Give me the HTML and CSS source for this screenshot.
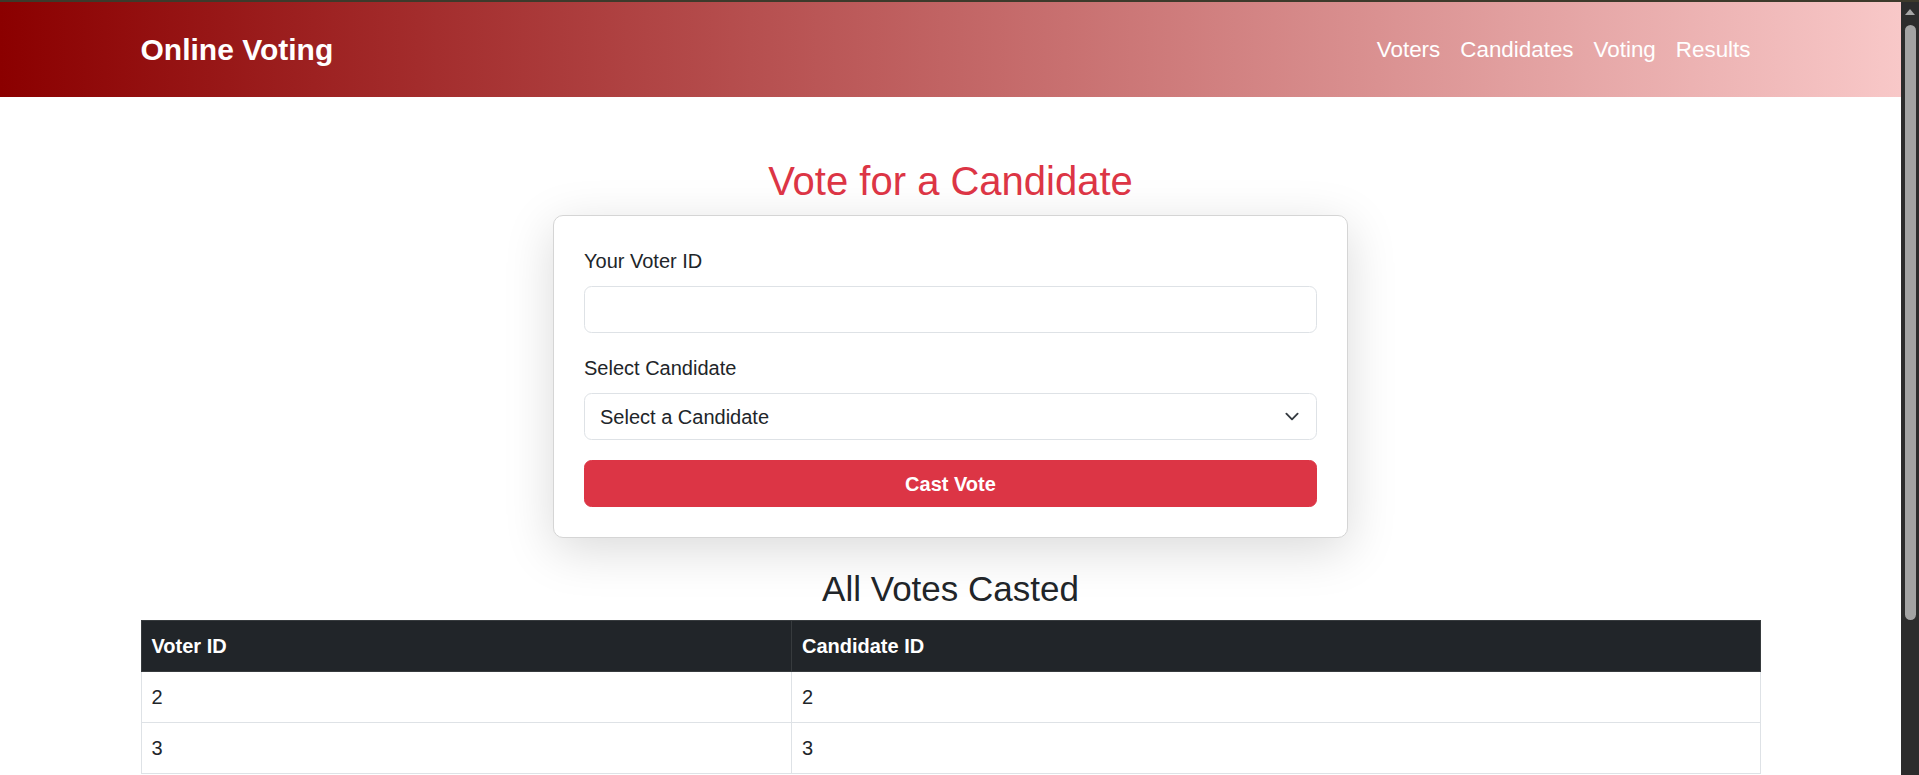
FILE: index.html
```html
<!DOCTYPE html>
<html lang="en">
<head>
<meta charset="utf-8">
<title>Online Voting</title>
<link rel="stylesheet" href="styles.css">
</head>
<body>
<div class="window">
  <div class="window-edge"></div>
  <div class="viewport">
    <div class="page">
      <nav class="navbar">
        <div class="container nav-inner">
          <a class="brand" href="#">Online Voting</a>
          <ul class="nav-links">
            <li><a href="#">Voters</a></li>
            <li><a href="#">Candidates</a></li>
            <li><a href="#">Voting</a></li>
            <li><a href="#">Results</a></li>
          </ul>
        </div>
      </nav>
      <main class="container">
        <h2 class="page-title">Vote for a Candidate</h2>
        <div class="card">
          <form class="vote-form">
            <div class="field">
              <label class="form-label" for="voterId">Your Voter ID</label>
              <input class="form-control" type="text" id="voterId">
            </div>
            <div class="field">
              <label class="form-label" for="candidate">Select Candidate</label>
              <div class="select-wrap">
                <select class="form-control form-select" id="candidate">
                  <option>Select a Candidate</option>
                </select>
                <svg class="select-chevron" width="20" height="15" viewBox="0 0 16 16" aria-hidden="true"><path d="m2 5 6 6 6-6" fill="none" stroke="#343a40" stroke-width="2" stroke-linecap="round" stroke-linejoin="round"/></svg>
              </div>
            </div>
            <button class="btn-vote" type="button">Cast Vote</button>
          </form>
        </div>
        <h3 class="section-title">All Votes Casted</h3>
        <table class="votes-table">
          <thead>
            <tr><th>Voter ID</th><th>Candidate ID</th></tr>
          </thead>
          <tbody>
            <tr><td>2</td><td>2</td></tr>
            <tr><td>3</td><td>3</td></tr>
          </tbody>
        </table>
      </main>
    </div>
    <div class="scrollbar">
      <div class="scroll-arrow"></div>
      <div class="scroll-thumb"></div>
    </div>
  </div>
</div>
</body>
</html>
```
FILE: styles.css
```css
* {
  box-sizing: border-box;
}

html,
body {
  margin: 0;
  padding: 0;
  height: 100%;
}

body {
  font-family: "Liberation Sans", Arial, sans-serif;
  font-size: 20px;
  line-height: 1.5;
  color: #212529;
  background: #fff;
  overflow: hidden;
}

.window {
  display: flex;
  flex-direction: column;
  height: 100vh;
}

.window-edge {
  flex: none;
  height: 2px;
  background: #3d3a2b;
}

.viewport {
  flex: 1;
  min-height: 0;
  display: flex;
}

.page {
  flex: 1;
  min-width: 0;
  overflow: hidden;
  background: #fff;
}

/* fake native scrollbar */
.scrollbar {
  flex: none;
  width: 18px;
  background: #2c2c2c;
  display: flex;
  flex-direction: column;
  align-items: center;
  padding-top: 7px;
}

.scroll-arrow {
  width: 0;
  height: 0;
  border-left: 5px solid transparent;
  border-right: 5px solid transparent;
  border-bottom: 6px solid #a6a6a6;
}

.scroll-thumb {
  margin-top: 10px;
  width: 11px;
  height: 595px;
  background: #a3a3a3;
  border-radius: 6px;
}

/* navbar */
.navbar {
  height: 95px;
  display: flex;
  align-items: center;
  background: linear-gradient(to right, #8b0000, #f8c8c8);
}

.container {
  width: 100%;
  max-width: 1650px;
  margin: 0 auto;
  padding: 0 15px;
}

.nav-inner {
  display: flex;
  align-items: center;
  justify-content: space-between;
}

.brand {
  color: #fff;
  font-weight: 700;
  font-size: 30px;
  line-height: 45px;
  text-decoration: none;
}

.nav-links {
  list-style: none;
  margin: 0;
  padding: 0;
  display: flex;
}

.nav-links a {
  display: block;
  padding: 0 10px;
  color: #fff;
  font-size: 22.4px;
  line-height: 33px;
  text-decoration: none;
}

/* form */
.page-title {
  margin: 60px 0 10px;
  font-size: 40px;
  font-weight: 400;
  line-height: 1.2;
  text-align: center;
  color: #dc3545;
}

.card {
  width: 795px;
  margin: 0 auto;
  padding: 30px;
  background: #fff;
  border: 1px solid #d5d5d5;
  border-radius: 10px;
  box-shadow: 0 12px 50px rgba(0, 0, 0, 0.15);
}

.vote-form {
  margin: 0;
}

.field {
  margin-bottom: 20px;
}

.form-label {
  display: block;
  margin-bottom: 10px;
  line-height: 30px;
}

.form-control {
  display: block;
  width: 100%;
  height: 47px;
  padding: 7.5px 15px;
  font: inherit;
  line-height: 30px;
  color: #212529;
  background: #fff;
  border: 1px solid #dee2e6;
  border-radius: 7.5px;
  outline: none;
}

.select-wrap {
  position: relative;
}

.form-select {
  appearance: none;
  -webkit-appearance: none;
  padding-right: 45px;
}

.select-chevron {
  position: absolute;
  right: 15px;
  top: 50%;
  margin-top: -7.5px;
  pointer-events: none;
}

.btn-vote {
  display: block;
  width: 100%;
  height: 47px;
  padding: 7.5px 15px;
  font: inherit;
  font-weight: 700;
  line-height: 30px;
  color: #fff;
  background: #dc3545;
  border: 1px solid #dc3545;
  border-radius: 7.5px;
  cursor: pointer;
}

/* table */
.section-title {
  margin: 30px 0 10px;
  font-size: 35px;
  font-weight: 400;
  line-height: 1.2;
  text-align: center;
  color: #212529;
}

.votes-table {
  width: 100%;
  border-collapse: collapse;
}

.votes-table th,
.votes-table td {
  padding: 10px;
  line-height: 30px;
  text-align: left;
  vertical-align: top;
  border: 1px solid #dee2e6;
}

.votes-table thead th {
  font-weight: 700;
  color: #fff;
  background: #212529;
  border-color: #373b3e;
}
```
